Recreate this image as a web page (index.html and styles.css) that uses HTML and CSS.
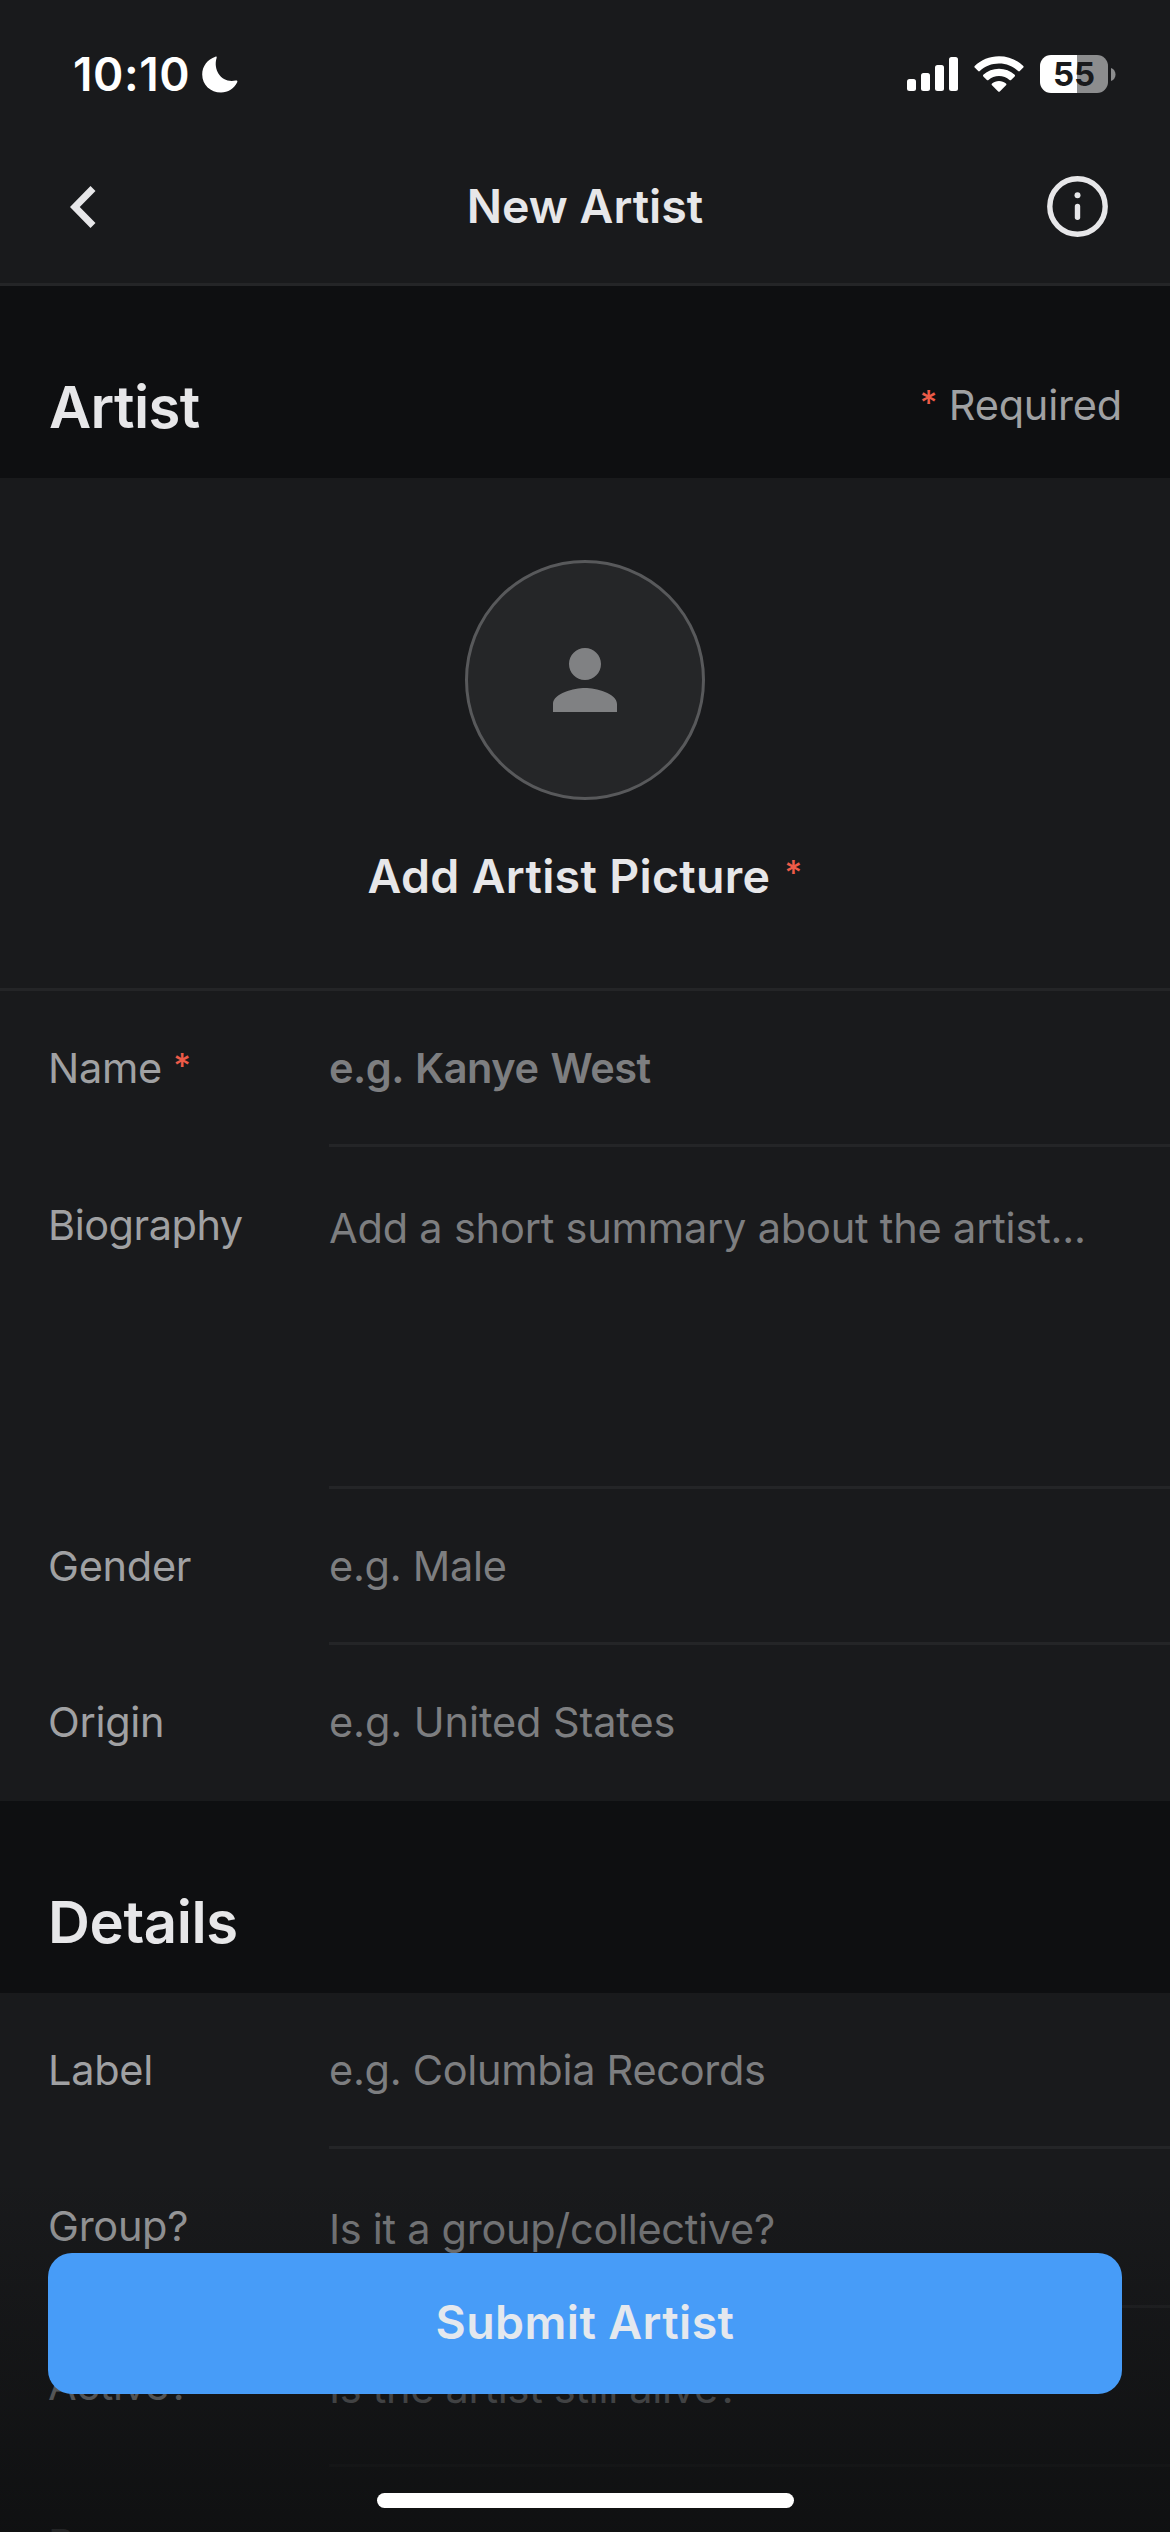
FILE: index.html
```html
<!DOCTYPE html>
<html lang="en">
<head>
  <meta charset="UTF-8">
  <meta name="viewport" content="width=device-width, initial-scale=1.0">
  <title>New Artist</title>
  <link rel="stylesheet" href="styles.css">
</head>
<body>
<div class="screen">

  <div class="status-bar">
    <div class="status-left">
      <span class="time">10:10</span>
      <svg class="moon" width="36" height="37" viewBox="0 0 36 37">
        <path d="M13.4 0.8 C14.4 0.2 15 0.9 14.6 2 C10.8 14.5 20 27.5 33.6 24.6 C35 24.2 35.8 24.8 35.2 26.2 C32.2 32.6 26 36.5 19 36.5 C8.5 36.5 0.2 28.6 0.2 18.4 C0.2 10.4 5.5 3.4 13.4 0.8 Z" fill="#fff"/>
      </svg>
    </div>
    <div class="status-right">
      <svg width="51" height="36" viewBox="0 0 51 36" fill="#fff">
        <rect x="0" y="23" width="9" height="12" rx="2.5"/>
        <rect x="14" y="17" width="9" height="18" rx="2.5"/>
        <rect x="28" y="9" width="9" height="26" rx="2.5"/>
        <rect x="42" y="1" width="9" height="34" rx="2.5"/>
      </svg>
      <svg width="50" height="36" viewBox="0 0 50 36" fill="#fff">
        <path d="M25 0.2 C34.5 0.2 43 3.9 49.3 9.9 Q50 10.7 49.3 11.5 L45.8 15.1 Q45 15.8 44.2 15.1 C39 10.3 32.4 7.6 25 7.6 C17.6 7.6 11 10.3 5.8 15.1 Q5 15.8 4.2 15.1 L0.7 11.5 Q0 10.7 0.7 9.9 C7 3.9 15.5 0.2 25 0.2 Z"/>
        <path d="M25 12.8 C31 12.8 36.5 15 40.7 18.8 Q41.4 19.6 40.7 20.4 L37.1 24 Q36.3 24.7 35.5 24 C32.7 21.5 29 20.1 25 20.1 C21 20.1 17.3 21.5 14.5 24 Q13.7 24.7 12.9 24 L9.3 20.4 Q8.6 19.6 9.3 18.8 C13.5 15 19 12.8 25 12.8 Z"/>
        <path d="M25 25 C27.6 25 30.1 26 32 27.6 Q32.8 28.4 32 29.2 L25.8 35.5 Q25 36.2 24.2 35.5 L18 29.2 Q17.2 28.4 18 27.6 C19.9 26 22.4 25 25 25 Z"/>
      </svg>
      <div class="battery">
        <div class="battery-body">55</div>
        <svg width="5" height="13" viewBox="0 0 5 13">
          <path d="M0 0 C6 2 6 11 0 13 Z" fill="#8c8d8e"/>
        </svg>
      </div>
    </div>
  </div>

  <div class="nav">
    <svg width="26" height="42" viewBox="0 0 26 42" fill="none" stroke="#e7e7e9" stroke-width="7">
      <path d="M23 2.5 L4.8 21 L23 39.5"/>
    </svg>
    <h1>New Artist</h1>
    <svg width="61" height="61" viewBox="0 0 61 61">
      <circle cx="30.5" cy="30.5" r="27.7" fill="none" stroke="#e7e7e9" stroke-width="5.4"/>
      <circle cx="30.5" cy="19.3" r="3" fill="#e7e7e9"/>
      <path d="M30.5 30.5 V41.3" stroke="#e7e7e9" stroke-width="5.4" stroke-linecap="round"/>
    </svg>
  </div>

  <div class="section-title">
    <h2 class="tight">Artist</h2>
    <p class="required"><span class="star">*</span> Required</p>
  </div>

  <div class="picture">
    <div class="avatar">
      <svg width="96" height="96" viewBox="0 0 24 24" fill="#808183">
        <path d="M12 12c2.21 0 4-1.79 4-4s-1.79-4-4-4-4 1.79-4 4 1.79 4 4 4zm0 2c-2.67 0-8 1.34-8 4v2h16v-2c0-2.66-5.33-4-8-4z"/>
      </svg>
    </div>
    <p>Add Artist Picture <span class="star">*</span></p>
  </div>

  <div class="form">
    <div class="row">
      <div class="label">Name <span class="star">*</span></div>
      <div class="field bold">e.g. Kanye West</div>
    </div>
    <div class="row bio">
      <div class="label">Biography</div>
      <div class="field area">Add a short summary about the artist...</div>
    </div>
    <div class="row">
      <div class="label">Gender</div>
      <div class="field">e.g. Male</div>
    </div>
    <div class="row last">
      <div class="label">Origin</div>
      <div class="field">e.g. United States</div>
    </div>
  </div>

  <div class="section-title">
    <h2>Details</h2>
  </div>

  <div class="form">
    <div class="row">
      <div class="label">Label</div>
      <div class="field">e.g. Columbia Records</div>
    </div>
    <div class="row tall">
      <div class="label">Group?</div>
      <div class="field area">Is it a group/collective?</div>
    </div>
    <div class="row tall">
      <div class="label">Active?</div>
      <div class="field area">Is the artist still alive?</div>
    </div>
    <div class="row">
      <div class="label">Born</div>
      <div class="field"></div>
    </div>
  </div>

  <div class="bottom">
    <button class="submit">Submit Artist</button>
    <div class="home-bar"></div>
  </div>

</div>
</body>
</html>
```
FILE: styles.css
```css
* {
    margin: 0;
    padding: 0;
    box-sizing: border-box;
}

body {
    background-color: #0e0f11;
    font-family: Inter, "Liberation Sans", sans-serif;
    color: #e7e7e9;
}

.screen {
    position: relative;
    width: 1170px;
    height: 2532px;
    overflow: hidden;
}

svg {
    display: block;
    flex-shrink: 0;
}

/* status bar */
.status-bar {
    height: 130px;
    padding: 44px 54px 26px 73px;
    display: flex;
    justify-content: space-between;
    align-items: center;
    background-color: #191a1c;
}

.status-left {
    display: flex;
    align-items: center;
    gap: 12px;
}

.time {
    color: #fff;
    font-size: 46px;
    font-weight: 600;
    line-height: 60px;
    letter-spacing: 0.6px;
}

.status-right {
    display: flex;
    align-items: center;
    gap: 16px;
}

.battery {
    display: flex;
    align-items: center;
    gap: 3px;
}

.battery-body {
    width: 68px;
    height: 38px;
    border-radius: 11px;
    background: linear-gradient(to right, #fff 37px, #8c8d8e 37px);
    color: #191a1c;
    font-size: 33px;
    font-weight: 700;
    line-height: 38px;
    text-align: center;
}

/* header */
.nav {
    height: 156px;
    padding: 0 62px 0 70px;
    display: flex;
    justify-content: space-between;
    align-items: center;
    background-color: #191a1c;
    border-bottom: 3px solid #242527;
}

.nav h1 {
    font-size: 46.5px;
    font-weight: 600;
    line-height: 60px;
    margin-left: 27px;
    margin-bottom: 2px;
}

.section-title {
    height: 192px;
    padding: 85px 48px 35px;
    display: flex;
    justify-content: space-between;
    align-items: center;
}

h2 {
    font-size: 58px;
    font-weight: 600;
    line-height: 72px;
    letter-spacing: -0.4px;
}

.tight {
    letter-spacing: -0.6px;
    margin-left: 1px;
}

.required {
    font-size: 41.5px;
    line-height: 60px;
    letter-spacing: -0.2px;
    color: #a0a1a3;
    margin-bottom: 4px;
}

.star {
    color: #ed5b48;
    font-size: 34px;
    font-weight: 500;
    line-height: 1;
    vertical-align: 5px;
}

/* picture */
.picture {
    height: 513px;
    padding-top: 82px;
    display: flex;
    flex-direction: column;
    align-items: center;
    gap: 46px;
    background-color: #191a1c;
    border-bottom: 3px solid #242527;
}

.avatar {
    width: 240px;
    height: 240px;
    border: 3px solid #58595b;
    border-radius: 50%;
    background-color: #252628;
    display: flex;
    justify-content: center;
    align-items: center;
}

.picture p {
    font-size: 46.5px;
    font-weight: 600;
    line-height: 60px;
    letter-spacing: 0.3px;
}

.picture .star {
    margin-left: 2px;
    vertical-align: 8px;
}

/* form rows */
.form {
    background-color: #191a1c;
    font-size: 41.5px;
    line-height: 60px;
    letter-spacing: -0.3px;
}

.row {
    height: 156px;
    padding-left: 48px;
    display: grid;
    grid-template-columns: 281px 1fr;
}

.bio {
    height: 342px;
}

.tall {
    height: 159px;
}

.label {
    padding-top: 47px;
    color: #a0a1a3;
}

.field {
    padding-top: 47px;
    color: #7d7e80;
    border-bottom: 3px solid #242527;
}

.area {
    padding-top: 50px;
}

.bio .label {
    padding-top: 48px;
    letter-spacing: -0.5px;
}

.bio .field {
    padding-top: 51px;
    letter-spacing: -0.2px;
}

.bold {
    font-weight: 600;
    letter-spacing: -0.5px;
    word-spacing: 2px;
}

.last .field {
    border-bottom: none;
    letter-spacing: -0.1px;
}

/* button that floats over the end of the form */
.bottom {
    position: absolute;
    left: 0;
    bottom: 0;
    width: 100%;
    height: 352px;
    padding: 73px 48px 24px;
    display: flex;
    flex-direction: column;
    justify-content: space-between;
    align-items: center;
    background: linear-gradient(rgba(14, 15, 16, 0), rgba(14, 15, 16, 0.86));
}

.submit {
    width: 100%;
    height: 141px;
    padding-bottom: 3px;
    border: none;
    border-radius: 24px;
    background-color: #479cf8;
    color: #e4e8ee;
    font-family: inherit;
    font-size: 46.5px;
    font-weight: 600;
    letter-spacing: 0.4px;
}

.home-bar {
    width: 417px;
    height: 15px;
    border-radius: 8px;
    background-color: #fff;
}
```
